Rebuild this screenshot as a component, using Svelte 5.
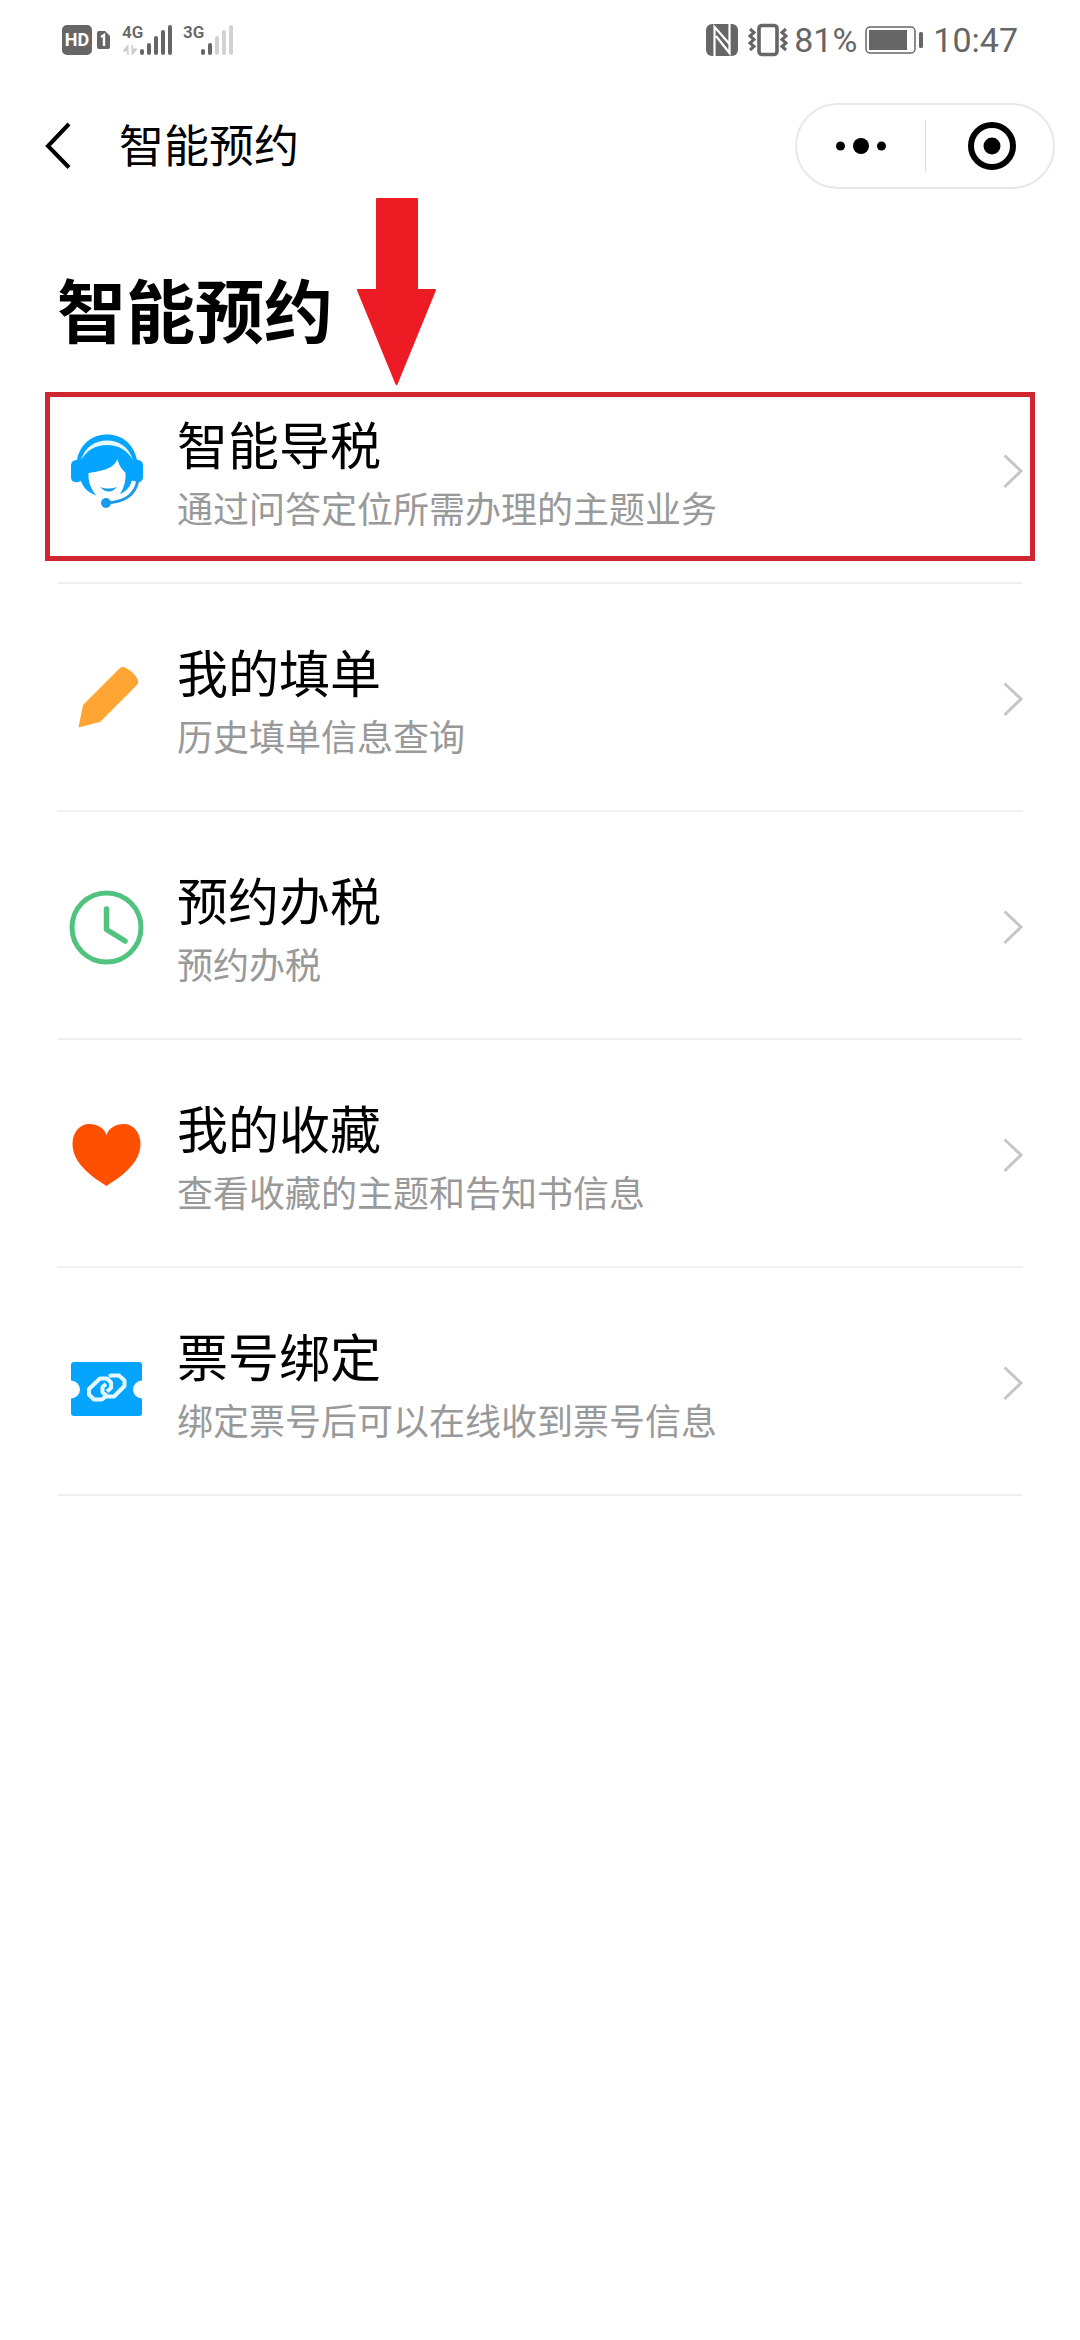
<script>
    const items = [
        { icon: 'agent', title: '智能导税', desc: '通过问答定位所需办理的主题业务', marked: true },
        { icon: 'pencil', title: '我的填单', desc: '历史填单信息查询' },
        { icon: 'clock', title: '预约办税', desc: '预约办税' },
        { icon: 'heart', title: '我的收藏', desc: '查看收藏的主题和告知书信息' },
        { icon: 'ticket', title: '票号绑定', desc: '绑定票号后可以在线收到票号信息' }
    ];

    const networks = [
        { name: '4G', level: 5, data: true },
        { name: '3G', level: 2, data: false }
    ];
    const barTops = [24, 18, 11, 5, 0];
</script>

<div class="page">
    <div class="status">
        <div class="status-left">
            <svg class="hd" width="30" height="30" viewBox="0 0 30 30">
                <rect width="30" height="30" rx="5" fill="#666" />
                <text x="15" y="21" text-anchor="middle" font-size="18" font-weight="700" fill="#fff">HD</text>
            </svg>
            <svg class="sim" width="13" height="18" viewBox="0 0 13 18">
                <path d="M2 0h6l5 5v11a2 2 0 0 1-2 2H2a2 2 0 0 1-2-2V2a2 2 0 0 1 2-2z" fill="#666" />
                <path d="M4 6l3-2v11" fill="none" stroke="#fff" stroke-width="2.4" />
            </svg>
            {#each networks as net}
                <svg class="signal" width="50" height="31" viewBox="0 0 50 31">
                    <text x="-1" y="13" font-size="17" font-weight="600" fill="#666">{net.name}</text>
                    {#if net.data}
                        <path d="M5 30V20L0 26h5zM9 20v10l5-6H9z" fill="#ccc" stroke="#ccc" stroke-width="1" />
                    {/if}
                    {#each barTops as top, i}
                        <rect x={17 + i * 7} y={top} width="4" height={30 - top} rx="2" fill={i < net.level ? '#666' : '#d2d2d2'} />
                    {/each}
                </svg>
            {/each}
        </div>
        <div class="status-right">
            <svg width="32" height="32" viewBox="0 0 32 32">
                <rect width="32" height="32" rx="6" fill="#666" />
                <path d="M8.5 32V3L23.5 20M10 12L23.5 29V0" fill="none" stroke="#fff" stroke-width="2.2" />
            </svg>
            <svg class="vibrate" width="40" height="32" viewBox="0 0 40 32" fill="none" stroke="#666">
                <rect x="11" y="1.5" width="18" height="29" rx="3" stroke-width="3.6" />
                <path d="M2 5l4 3.500-4 3.500 4 3.500-4 3.500 4 3.500-4 3.500M38 5l-4 3.500 4 3.500-4 3.500 4 3.500-4 3.500 4 3.500" stroke-width="3" />
            </svg>
            <span>81%</span>
            <svg class="battery" width="58" height="28" viewBox="0 0 58 28">
                <rect x="1" y="1" width="49" height="26" rx="4" fill="none" stroke="#666" stroke-width="1.5" />
                <rect x="4" y="4" width="38" height="20" fill="#666" />
                <rect x="54" y="6" width="4" height="16" rx="1.5" fill="#666" />
            </svg>
            <span>10:47</span>
        </div>
    </div>

    <header class="nav">
        <button class="back" aria-label="返回">
            <svg width="26" height="48" viewBox="0 0 26 48">
                <path d="M24 2L3 24l21 21.5" fill="none" stroke="#000" stroke-width="4" />
            </svg>
        </button>
        <div class="nav-title">智能预约</div>
        <div class="capsule">
            <button aria-label="更多">
                <svg width="50" height="50" viewBox="0 0 50 50">
                    <circle cx="4.5" cy="25" r="4.5" />
                    <circle cx="25" cy="25" r="8" />
                    <circle cx="45.5" cy="25" r="4.5" />
                </svg>
            </button>
            <span class="divider"></span>
            <button aria-label="关闭">
                <svg width="50" height="50" viewBox="0 0 50 50">
                    <circle cx="28" cy="25" r="21" fill="none" stroke="#000" stroke-width="6" />
                    <circle cx="28" cy="25" r="8.5" />
                </svg>
            </button>
        </div>
    </header>

    <main>
        <h1>智能预约</h1>
        <ul>
            {#each items as item}
                <li>
                    <a href="#{item.icon}">
                        <svg class="icon" width="100" height="100" viewBox="0 0 100 100">
                            {#if item.icon === 'agent'}
                                <!-- headset band and hair -->
                                <path d="M20 41C23 25 35 15.500 50 15.500S77 25 80 41C84 41 86 43 86 47V58C86 62 83 64 78 63L75 62C73 68 69 73 62 76.500H39C30 73 26 68 24 62C17 65 14 62 14 58V47C14 43 16 41 20 41z" fill="#05a5ff" />
                                <path d="M24 41C28 28 38 21.500 50 21.500S72 28 76 41C70 31 61 26 50 26S30 31 24 41z" fill="#e6f9ff" />
                                <!-- face -->
                                <path d="M31.500 54C43 52 56 51 60.500 40C62 47 65 50 68.500 54C69 62 67 69 62 77H39.500C34 70 31 63 31.500 54z" fill="#fff" />
                                <path d="M43 68Q51 71 60 68Q52 77 43 68z" fill="#1a9bea" />
                                <!-- microphone -->
                                <path d="M77 62C74 73 66 78 54 80" fill="none" stroke="#fff" stroke-width="4" />
                                <path d="M81 61C78 77 67 83 49 84" fill="none" stroke="#1a9bea" stroke-width="3" />
                                <circle cx="49" cy="84" r="5" fill="#1a9bea" />
                            {:else if item.icon === 'pencil'}
                                <path d="M21.5 80.5L26 58L63 21Q65 19 69 21Q77 25 81 33Q82 36 80 38L43 75z" fill="#ffa533" />
                            {:else if item.icon === 'clock'}
                                <circle cx="49.5" cy="52.5" r="34.5" fill="none" stroke="#52c27f" stroke-width="5" />
                                <path d="M49.5 34v20.5L68 66" fill="none" stroke="#52c27f" stroke-width="5.5" stroke-linecap="round" stroke-linejoin="round" />
                            {:else if item.icon === 'heart'}
                                <path d="M49.5 83C39 76 15.5 62 15.5 41C15.5 29 23 21 32 21C41 21 47 25 49.5 32C52 25 58 21 67 21C76 21 83.5 29 83.5 41C83.5 62 60 76 49.5 83z" fill="#ff5000" />
                            {:else}
                                <path d="M17 31H82Q85 31 85 34V49.5A9 9 0 0 0 85 67.5V82Q85 85 82 85H17Q14 85 14 82V67.5A9 9 0 0 0 14 49.5V34Q14 31 17 31z" fill="#05a5ff" />
                                <g fill="none" stroke="#e6f8ff" stroke-width="4" stroke-linejoin="round">
                                    <path d="M49 65L45 68.5H37L32 63.5V58L43 47.5H50L54 51.5V57L50 60.5" />
                                    <path d="M52 45.5L54 44.5H62L67.500 49.5V55L57 65.5H50L45.5 61V56L49 53" />
                                </g>
                            {/if}
                        </svg>
                        <span class="text">
                            <span class="title">{item.title}</span>
                            <span class="desc">{item.desc}</span>
                        </span>
                        <svg class="chevron" width="20" height="40" viewBox="0 0 20 40">
                            <path d="M1.5 6.5L18 22L1.5 38" fill="none" stroke="#c6c6c6" stroke-width="3" />
                        </svg>
                    </a>
                    {#if item.marked}
                        <div class="frame"></div>
                        <svg class="arrow" width="80" height="188" viewBox="0 0 80 188">
                            <path d="M20 1H60V92H78L39.5 186L1 92H20z" fill="#ed1c24" stroke="#ed1c24" stroke-width="2" stroke-linejoin="round" />
                        </svg>
                    {/if}
                </li>
            {/each}
        </ul>
    </main>
</div>

<style>
    :global(body) {
        margin: 0;
        background: #fff;
    }
    .page {
        min-height: 100vh;
        background: #fff;
        color: #000;
        font-family: 'Noto Sans CJK SC', sans-serif;
    }
    svg {
        display: block;
        flex: none;
        overflow: visible;
    }

    /* Phone status bar */
    .status {
        display: flex;
        justify-content: space-between;
        align-items: center;
        height: 80px;
        padding: 0 62px;
        font-family: Roboto, sans-serif;
        font-size: 34px;
        line-height: 40px;
        color: #666;
    }
    .status-left,
    .status-right {
        display: flex;
        align-items: center;
    }
    .sim {
        margin-left: 5px;
        margin-right: 2px;
    }
    .signal {
        margin-left: 11px;
    }
    .vibrate {
        margin: 0 6px 0 10px;
    }
    .battery {
        margin: 0 10px 0 8px;
    }

    /* Title bar */
    .nav {
        display: flex;
        align-items: center;
        height: 132px;
        padding: 0 25px 0 45px;
    }
    button {
        display: flex;
        align-items: center;
        justify-content: center;
        padding: 0;
        border: 0;
        background: none;
        cursor: pointer;
    }
    .nav-title {
        flex: 1;
        margin-left: 48px;
        padding-bottom: 4px;
        font-size: 45px;
        line-height: 64px;
    }
    .capsule {
        display: flex;
        align-items: center;
        box-sizing: border-box;
        width: 260px;
        height: 86px;
        border: 2px solid #e8e8e8;
        border-radius: 43px;
    }
    .capsule button {
        flex: 1;
        height: 100%;
    }
    .divider {
        width: 1px;
        height: 52px;
        background: #ddd;
    }

    /* Service list */
    main {
        padding: 48px 57px 0;
    }
    h1 {
        margin: 0;
        font-size: 69px;
        line-height: 96px;
        font-weight: 700;
    }
    ul {
        margin: 0;
        padding: 0;
        list-style: none;
    }
    li {
        position: relative;
        border-bottom: 2px solid #f0f0f0;
    }
    a {
        display: flex;
        align-items: center;
        height: 226px;
        color: inherit;
        text-decoration: none;
    }
    .text {
        flex: 1;
        display: flex;
        flex-direction: column;
        margin-left: 20px;
        padding-top: 4px;
    }
    .title {
        font-size: 51px;
        line-height: 72px;
    }
    .desc {
        font-size: 36px;
        line-height: 56px;
        color: #999;
    }

    /* Callout over the first entry */
    .frame {
        position: absolute;
        inset: 36px -12px 21px;
        border: 5px solid #d0262f;
        pointer-events: none;
    }
    .arrow {
        position: absolute;
        left: 300px;
        top: -158px;
        pointer-events: none;
    }
</style>
